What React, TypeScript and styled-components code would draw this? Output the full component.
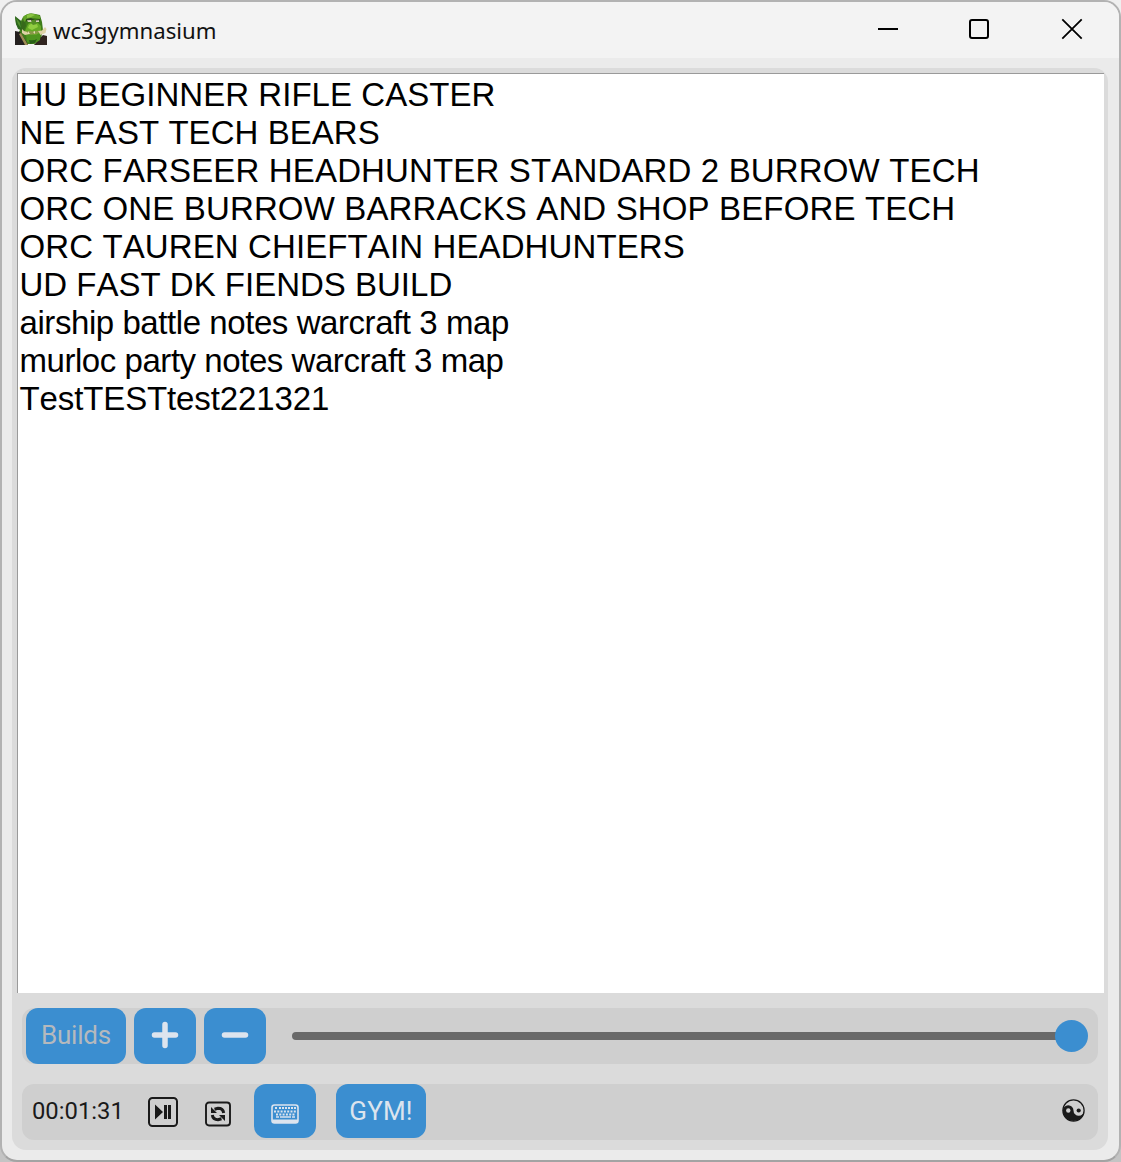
import React from 'react';
import styled, { createGlobalStyle } from 'styled-components';

const Global = createGlobalStyle`
  * { box-sizing: border-box; }
  body { margin: 0; background: linear-gradient(#efefef 0, #efefef 40px, #c4c4c4 1100px); overflow: hidden; }
`;

const Window = styled.div`
  width: 1121px;
  height: 1162px;
  display: flex;
  flex-direction: column;
  border: 2px solid #b2b2b2;
  border-bottom-color: #a3a3a3;
  border-radius: 17px;
  overflow: hidden;
  background: #ebebeb;
  color: #1a1a1a;
  font-family: 'Liberation Sans', Arial, sans-serif;
`;

const TitleBar = styled.header`
  height: 56px;
  flex: none;
  display: flex;
  align-items: center;
  padding: 0 36px 2px 13px;
  background: #f3f3f3;
`;

const Title = styled.h1`
  margin: 4px auto 0 6px;
  font: 400 22.2px 'Noto Sans', 'Open Sans', sans-serif;
  line-height: 30px;
  color: #111;
`;

const WindowButton = styled.button<{ $gap?: number }>`
  display: flex;
  padding: 0;
  margin-left: ${p => p.$gap ?? 0}px;
  border: 0;
  background: none;
  color: #000;
`;

const Panel = styled.main`
  display: flex;
  flex-direction: column;
  width: 1096px;
  height: 1082px;
  margin: 10px 0 0 10px;
  padding: 5px 4px 10px 5px;
  border-radius: 14px;
  background: #dbdbdb;
`;

const BuildList = styled.ul`
  flex: none;
  height: 920px;
  margin: 0;
  padding: 2px 0 0 1.5px;
  list-style: none;
  background: #fff;
  border: solid #9a9a9a;
  border-width: 1px 0 0 1px;
  color: #000;
`;

const Build = styled.li<{ $spacing: number }>`
  height: 38px;
  line-height: 38px;
  font-size: 33px;
  font-kerning: none;
  letter-spacing: ${p => p.$spacing}px;
  white-space: pre;
`;

const Toolbar = styled.div<{ $top: number }>`
  flex: none;
  display: flex;
  align-items: center;
  width: 1076px;
  height: 56px;
  margin: ${p => p.$top}px 0 0 5px;
  border-radius: 12px;
  background: #cfcfcf;
`;

const BuildBar = styled(Toolbar)`
  padding: 0 10px 0 4px;
`;

const TimerBar = styled(Toolbar)`
  padding: 0 13px 0 10px;
`;

const Button = styled.button<{ $w: number; $h?: number; $gap?: number; $muted?: boolean }>`
  flex: none;
  display: flex;
  align-items: center;
  justify-content: center;
  align-self: flex-start;
  width: ${p => p.$w}px;
  height: ${p => p.$h ?? 56}px;
  margin-left: ${p => p.$gap ?? 0}px;
  padding: 0 0 2px;
  border: 0;
  border-radius: 12px;
  background: #3b8ed0;
  color: ${p => (p.$muted ? '#b5b9bd' : '#dce4ee')};
  font: 400 26px Roboto, sans-serif;
  letter-spacing: ${p => (p.$muted ? -0.2 : 0.15)}px;
`;

const KeyboardButton = styled(Button)`
  padding: 6px 0 0;
`;

const GymButton = styled(Button)`
  padding: 0;
`;

const Slider = styled.div`
  flex: 1;
  display: flex;
  align-items: center;
  margin-left: 26px;
`;

const Track = styled.div`
  flex: 1;
  height: 8px;
  margin-right: -2px;
  border-radius: 4px 0 0 4px;
  background: #696969;
`;

const Thumb = styled.div`
  width: 33px;
  height: 32px;
  border-radius: 50%;
  background: #3b8ed0;
`;

const Clock = styled.time`
  width: 116px;
  padding-bottom: 2px;
  font: 400 23.8px Roboto, sans-serif;
`;

const IconButton = styled.button<{ $left?: number; $down?: number }>`
  display: flex;
  margin: ${p => p.$down ?? 0}px 0 0 ${p => p.$left ?? 0}px;
  padding: 0;
  border: 0;
  background: none;
  color: #1a1a1a;
`;

const ThemeButton = styled(IconButton)`
  margin: 0 0 3px auto;
`;

const OrcPortrait = () => (
  <svg width="32" height="32" viewBox="0 0 32 32">
    <path d="M0 4l6 4 2-4q5-5 12-3l5 1 2 7 1 8-2 8-7 6H8L2 22l3-5-4-6z" fill="#3f7d1a" />
    <path d="M0 3l6 5 1 9-4-1-2-5z" fill="#2c651d" />
    <path d="M1 5l4 5 1 5-3-4z" fill="#4f902b" />
    <path d="M7 8l3-1 1 6-2 4-3 1z" fill="#37691b" />
    <path d="M8 4q5-5 12-3l5 2v3l-6-1-7 1-3 3z" fill="#62a427" />
    <path d="M12 2q4-2 8 0l-4 2-4 1z" fill="#8bc443" />
    <path d="M13 11q5-4 10-1l3 3v8l-6 6-8-3-2-6z" fill="#66aa25" />
    <path d="M14 12q4-3 8-1l1 3-6 3-4-2z" fill="#91cd41" />
    <path d="M11 6l5-1 4 2 5-1v1.8l-5 .7-4-1-5 1z" fill="#2c481a" />
    <path d="M12 7.3l4-.3 1 2h-4zM20.5 7.6l3.5-.4v1.8h-3z" fill="#d7d1ba" />
    <path d="M17 7h3l2 4-4 1-2-2z" fill="#548d25" />
    <path d="M0 18l5 1 6 9 2 4H0z" fill="#24201f" />
    <path d="M4 21l2-1 7 12h-3z" fill="#9e8c55" />
    <path d="M23 27l5-5 4 1v9H19z" fill="#30241f" />
    <path d="M11 21l10 1 5-3-1 8-6 4-7-2z" fill="#4e941f" />
    <path d="M14 27q5 1 8-1l-2 4-5 1z" fill="#285e16" />
    <path d="M10 18.5q5-1 9 0l5-1-1 3-6 1-6 0z" fill="#899948" />
    <path d="M7 16l2 2 3 1 2 2-4 1-3-2zM23 18l4-.5L30 14l1.5 2-1 4-5 2z" fill="#ded2a6" />
    <path d="M13 18l2 3h-2zM18 19l2-1v3z" fill="#e7ddb6" />
  </svg>
);

const PlayPause = () => (
  <svg width="30" height="30" viewBox="0 0 30 30">
    <rect x="1" y="1" width="28" height="28" rx="3.5" fill="none" stroke="currentColor" strokeWidth="2" />
    <path d="M7 7.5l8 7.5-8 7.5zM16 8h3v14h-3zM20 8h3v14h-3z" fill="currentColor" />
  </svg>
);

const Reset = () => (
  <svg width="26" height="26" viewBox="0 0 26 26">
    <rect x="1" y="1.5" width="24" height="23" rx="3" fill="none" stroke="currentColor" strokeWidth="1.9" />
    <path d="M18.7 12Q18 7.3 13 7.3L9.5 8.2M7.3 14Q8 18.7 13 18.7l3.5-1" fill="none" stroke="currentColor" strokeWidth="3" />
    <path d="M6 6v6h6zM14 14h6v6z" fill="currentColor" />
  </svg>
);

const Keyboard = () => (
  <svg width="28" height="20" viewBox="0 0 28 20">
    <rect x="1" y="1" width="26" height="18" rx="2.5" fill="none" stroke="currentColor" strokeWidth="1.6" />
    <path d="M1 15.5h26v3.5H2z" fill="currentColor" />
    <path d="M4 4h2M8 4h17" stroke="currentColor" strokeWidth="1.8" strokeDasharray="2 1" />
    <path d="M3 7.5h22M5 10.5h19" stroke="currentColor" strokeWidth="1.8" strokeDasharray="2 1.3" />
    <path d="M5 13h3M9 13h11M21 13h3" stroke="currentColor" strokeWidth="1.6" />
  </svg>
);

const YinYang = () => (
  <svg width="23" height="23" viewBox="0 0 23 23">
    <circle cx="11.5" cy="11.5" r="10.6" fill="none" stroke="currentColor" strokeWidth="1.3" />
    <path d="M.9 11.5a5.3 5.3 0 0 1 10.6 0 5.3 5.3 0 0 0 10.6 0 10.6 10.6 0 0 1-21.2 0z" fill="currentColor" />
    <circle cx="6.3" cy="11.5" r="2.2" fill="#cfcfcf" />
    <circle cx="16.7" cy="11.5" r="2.1" fill="currentColor" />
  </svg>
);

const builds = [
  { name: 'HU BEGINNER RIFLE CASTER', spacing: 0.04 },
  { name: 'NE FAST TECH BEARS', spacing: 0.05 },
  { name: 'ORC FARSEER HEADHUNTER STANDARD 2 BURROW TECH', spacing: 0.15 },
  { name: 'ORC ONE BURROW BARRACKS AND SHOP BEFORE TECH', spacing: 0.14 },
  { name: 'ORC TAUREN CHIEFTAIN HEADHUNTERS', spacing: 0.11 },
  { name: 'UD FAST DK FIENDS BUILD', spacing: 0 },
  { name: 'airship battle notes warcraft 3 map', spacing: -0.43 },
  { name: 'murloc party notes warcraft 3 map', spacing: -0.45 },
  { name: 'TestTESTtest221321', spacing: -0.12 },
];

export default function App() {
  return (
    <>
      <Global />
      <Window>
        <TitleBar>
          <OrcPortrait />
          <Title>wc3gymnasium</Title>
          <WindowButton aria-label="Minimize">
            <svg width="22" height="22"><path d="M1 11h20" stroke="currentColor" strokeWidth="2" /></svg>
          </WindowButton>
          <WindowButton aria-label="Maximize" $gap={69}>
            <svg width="22" height="22"><rect x="2" y="2" width="18" height="18" rx="2" fill="none" stroke="currentColor" strokeWidth="2" /></svg>
          </WindowButton>
          <WindowButton aria-label="Close" $gap={71}>
            <svg width="22" height="22"><path d="M1.3 1.3l19.4 19.4M20.7 1.3L1.3 20.7" stroke="currentColor" strokeWidth="1.8" /></svg>
          </WindowButton>
        </TitleBar>
        <Panel>
          <BuildList>
            {builds.map(b => <Build key={b.name} $spacing={b.spacing}>{b.name}</Build>)}
          </BuildList>
          <BuildBar $top={15}>
            <Button $w={100} $muted>Builds</Button>
            <Button $w={62} $gap={8} aria-label="Add">
              <svg width="28" height="28"><path d="M14 3.5v21M3.5 14h21" stroke="currentColor" strokeWidth="5.5" strokeLinecap="round" /></svg>
            </Button>
            <Button $w={62} $gap={8} aria-label="Remove">
              <svg width="28" height="28"><path d="M3.5 14h21" stroke="currentColor" strokeWidth="5.5" strokeLinecap="round" /></svg>
            </Button>
            <Slider><Track /><Thumb /></Slider>
          </BuildBar>
          <TimerBar $top={20}>
            <Clock>00:01:31</Clock>
            <IconButton aria-label="Play or pause"><PlayPause /></IconButton>
            <IconButton aria-label="Reset" $left={27} $down={3}><Reset /></IconButton>
            <KeyboardButton $w={62} $h={54} $gap={23} aria-label="Keyboard"><Keyboard /></KeyboardButton>
            <GymButton $w={90} $h={54} $gap={20}>GYM!</GymButton>
            <ThemeButton aria-label="Theme"><YinYang /></ThemeButton>
          </TimerBar>
        </Panel>
      </Window>
    </>
  );
}
